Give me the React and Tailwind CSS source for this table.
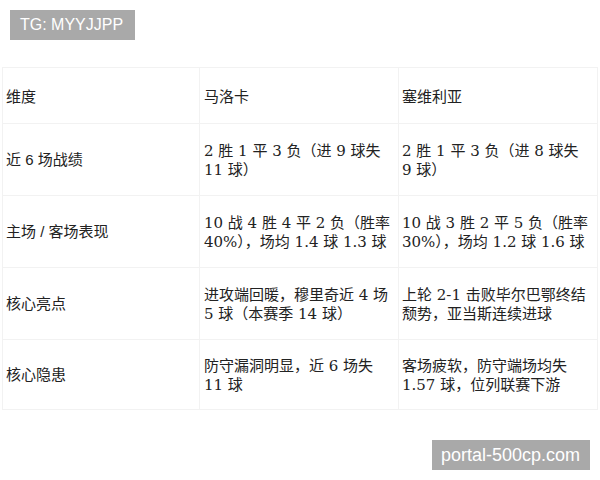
import React from "react";

const rows = [
  {
    label: "近 6 场战绩",
    a: ["2 胜 1 平 3 负（进 9 球失", "11 球）"],
    b: ["2 胜 1 平 3 负（进 8 球失", "9 球）"],
  },
  {
    label: "主场 / 客场表现",
    a: ["10 战 4 胜 4 平 2 负（胜率", "40%），场均 1.4 球 1.3 球"],
    b: ["10 战 3 胜 2 平 5 负（胜率", "30%），场均 1.2 球 1.6 球"],
  },
  {
    label: "核心亮点",
    a: ["进攻端回暖，穆里奇近 4 场", "5 球（本赛季 14 球）"],
    b: ["上轮 2-1 击败毕尔巴鄂终结", "颓势，亚当斯连续进球"],
  },
  {
    label: "核心隐患",
    a: ["防守漏洞明显，近 6 场失", "11 球"],
    b: ["客场疲软，防守端场均失", "1.57 球，位列联赛下游"],
  },
];

const sans = "font-['Liberation_Sans','Noto_Sans_CJK_SC',sans-serif]";
const serif = "font-['DejaVu_Serif','Noto_Sans_CJK_SC',serif]";

const Lines = ({ lines }) => (
  <div className={`${serif} text-[15px] leading-[19px] whitespace-nowrap`}>
    {lines.map((l, i) => (
      <div key={i}>{l}</div>
    ))}
  </div>
);

export default function App() {
  return (
    <div className="w-[600px] h-[480px] bg-white relative overflow-hidden text-[#222]">
      <div className="absolute left-[10px] top-[10px] h-[30px] w-[125px] bg-[#a9a9a9] text-white text-[16px] leading-[30px] pl-[10px] font-['Liberation_Sans',sans-serif]">
        TG: MYYJJPP
      </div>

      <div className="pt-[67px] pl-[2px]">
        <table className="border-collapse table-fixed w-[595px]">
          <colgroup>
            <col className="w-[197px]" />
            <col className="w-[199px]" />
            <col className="w-[199px]" />
          </colgroup>
          <tbody>
            <tr className="h-[56px]">
              <td className={`border border-[#f2f2f2] pl-[3px] pt-[3px] text-[15px] ${sans}`}>维度</td>
              <td className={`border border-[#f2f2f2] pl-[4px] pt-[3px] text-[15px] ${sans}`}>马洛卡</td>
              <td className={`border border-[#f2f2f2] pl-[3px] pt-[3px] text-[15px] ${sans}`}>塞维利亚</td>
            </tr>
            {rows.map((r, i) => (
              <tr key={i} className={i === 3 ? "h-[70px]" : "h-[72px]"}>
                <td className={`border border-[#f2f2f2] pl-[3px] pt-[2px] text-[15px] ${sans}`}>{r.label}</td>
                <td className="border border-[#f2f2f2] pl-[4px] pt-[2px]">
                  <Lines lines={r.a} />
                </td>
                <td className="border border-[#f2f2f2] pl-[3px] pt-[2px]">
                  <Lines lines={r.b} />
                </td>
              </tr>
            ))}
          </tbody>
        </table>
      </div>

      <div className="absolute left-[432px] top-[440px] h-[30px] w-[158px] bg-[#a9a9a9] text-white text-[18px] leading-[30px] pl-[9px] font-['Liberation_Sans',sans-serif]">
        portal-500cp.com
      </div>
    </div>
  );
}
